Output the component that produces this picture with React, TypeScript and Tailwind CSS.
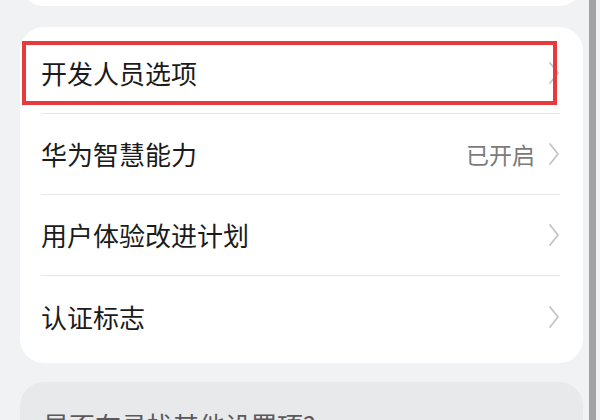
const Chevron = () => (
  <svg width="12" height="24" viewBox="0 0 12 24" fill="none" className="shrink-0">
    <path d="M2 2l8 10-8 10" stroke="#c4c4c6" strokeWidth="1.8" strokeLinecap="round" strokeLinejoin="round" />
  </svg>
);

const rows = [
  { label: '开发人员选项', value: '' },
  { label: '华为智慧能力', value: '已开启' },
  { label: '用户体验改进计划', value: '' },
  { label: '认证标志', value: '' },
];

export default function App() {
  return (
    <div
      className="flex h-[420px] w-[600px] overflow-hidden bg-[#f1f2f4]"
      style={{ fontFamily: '"Noto Sans CJK SC", "Noto Sans", sans-serif' }}
    >
      <div className="flex w-[589px] flex-col pl-5">
        {/* previous group, mostly scrolled away */}
        <div className="-mt-[54px] h-[60px] w-[563px] shrink-0 rounded-[24px] bg-white" />

        {/* main group */}
        <div className="mt-[21px] w-[563px] shrink-0 rounded-[24px] bg-white py-[6px]">
          {rows.map((row, i) => (
            <div key={row.label} className="relative pl-[21px] pr-[23px]">
              <div
                className={`flex h-[81px] items-center justify-between ${
                  i < rows.length - 1 ? 'border-b border-[#e6e6e8]' : ''
                }`}
              >
                <span className="text-[26px] leading-none text-[#1b1b1b]">{row.label}</span>
                <div className="flex items-center gap-[13px]">
                  {row.value && <span className="text-[23px] leading-none text-[#7b7b7b]">{row.value}</span>}
                  <Chevron />
                </div>
              </div>
              {i === 0 && (
                <div className="pointer-events-none absolute left-[2px] top-[8px] h-[64px] w-[535px] border-[4px] border-[#e8393d]" />
              )}
            </div>
          ))}
        </div>

        {/* search hint group */}
        <div className="mt-[19px] w-[563px] shrink-0 rounded-[24px] bg-[#e8e9eb] px-[23px] pt-[30px] pb-6">
          <span className="text-[26px] leading-none text-[#5a5a5c]">是否在寻找其他设置项?</span>
        </div>
      </div>

      {/* scrollbar */}
      <div className="h-full w-[7px] bg-[#a2a2a4]" />
    </div>
  );
}
